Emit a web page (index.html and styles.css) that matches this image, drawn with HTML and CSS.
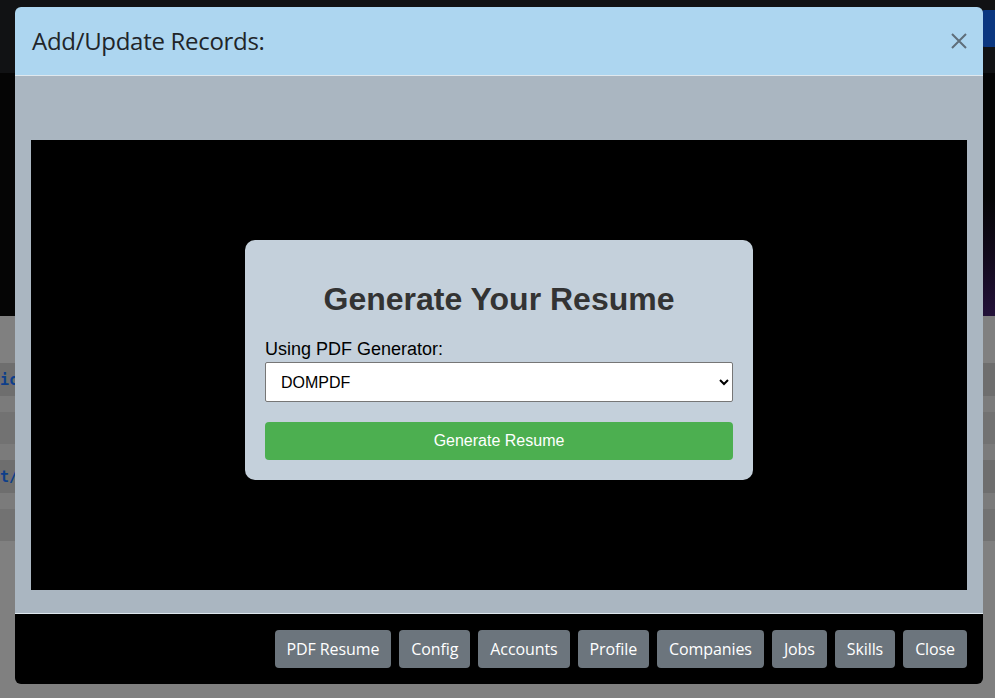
FILE: index.html
```html
<!DOCTYPE html>
<html>
<head>
<meta charset="utf-8">
<link rel="stylesheet" href="styles.css">
</head>
<body>
<div class="page">
  <div class="navbar"><span class="nav-btn"></span></div>
  <div class="hero"></div>
  <div class="table">
    <div class="row r-a"></div>
    <div class="row r-dark"><span class="code">ic</span></div>
    <div class="row r-a2"></div>
    <div class="row r-mid"></div>
    <div class="row r-a2"></div>
    <div class="row r-dark"><span class="code">t/</span></div>
    <div class="row r-a2"></div>
    <div class="row r-mid"></div>
  </div>
</div>

<div class="modal">
  <div class="modal-header">
    <h5 class="modal-title">Add/Update Records:</h5>
    <button class="btn-close" aria-label="Close">
      <svg width="16" height="16" viewBox="0 0 16 16"><path d="M1 1L15 15M15 1L1 15" stroke="#5f6e7a" stroke-width="2" fill="none"/></svg>
    </button>
  </div>
  <div class="modal-body">
    <div class="frame">
      <div class="card">
        <h1 class="card-title">Generate Your Resume</h1>
        <label class="label">Using PDF Generator:</label>
        <select class="select"><option>DOMPDF</option></select>
        <button class="gen-btn">Generate Resume</button>
      </div>
    </div>
  </div>
  <div class="modal-footer">
    <button class="btn">PDF Resume</button>
    <button class="btn">Config</button>
    <button class="btn">Accounts</button>
    <button class="btn">Profile</button>
    <button class="btn">Companies</button>
    <button class="btn">Jobs</button>
    <button class="btn">Skills</button>
    <button class="btn">Close</button>
  </div>
</div>
</body>
</html>
```
FILE: styles.css
```css
* { box-sizing: border-box; }
html, body { margin: 0; padding: 0; width: 995px; height: 698px; overflow: hidden; background: #808080; }
.page { width: 995px; height: 698px; display: flex; flex-direction: column; }
.navbar { height: 73px; background: #111214; display: flex; justify-content: flex-end; padding-top: 10px; }
.nav-btn { width: 14px; height: 37px; background: #0b3780; border-radius: 4px 0 0 4px; display: block; }
.hero { height: 243px; background: radial-gradient(ellipse 200px 120px at 100% 100%, #24123a 0%, #120a1c 50%, #050505 100%); }
.table { flex: 1; background: #808080; display: flex; flex-direction: column; padding-top: 47px; }
.row { display: flex; align-items: center; }
.r-dark { height: 33px; background: #6e6e6e; }
.r-a { height: 0; }
.r-a2 { height: 16px; background: #7b7b7b; }
.r-mid { height: 32px; background: #727272; }
.code { font-family: "DejaVu Sans Mono", monospace; font-weight: bold; font-size: 15px; color: #0d3e8a; }

.modal { position: absolute; left: 15px; top: 7px; width: 968px; height: 677px; border-radius: 6px; overflow: hidden; display: flex; flex-direction: column; font-family: "Segoe UI", "Open Sans", "Noto Sans", sans-serif; }
.modal-header { height: 69px; background: #add6f0; border-bottom: 1px solid #dfe8ee; display: flex; align-items: center; justify-content: space-between; padding: 0 16px 0 17px; }
.modal-title { margin: 0; font-size: 24px; font-weight: 500; color: #212529; line-height: 36px; letter-spacing: -0.3px; }
.btn-close { background: none; border: none; padding: 0; width: 16px; height: 16px; margin-top: 0; display: flex; }
.modal-body { height: 538px; background: #aab6c1; padding: 64px 16px 0 16px; border-bottom: 1px solid #dfe8ee; }
.frame { height: 450px; background: #000; display: flex; align-items: center; justify-content: center; padding-bottom: 10px; }
.card { width: 508px; height: 240px; background: #c4d0db; border-radius: 10px; padding: 20px; display: flex; flex-direction: column; font-family: "Liberation Sans", Arial, sans-serif; }
.card-title { margin: 21px 0 0 0; text-align: center; font-size: 32px; line-height: 37px; font-weight: bold; color: #333; }
.label { margin-top: 21px; font-size: 18px; line-height: 20px; color: #000; }
.select { margin-top: 3px; height: 40px; width: 468px; font-family: "Liberation Sans", Arial, sans-serif; font-size: 16px; padding: 0 11px; border: 1px solid #767676; border-radius: 2px; background: #fff; color: #000; }
.gen-btn { margin-top: 20px; height: 38px; width: 468px; background: #4caf50; color: #fff; border: none; border-radius: 4px; font-family: "Liberation Sans", Arial, sans-serif; font-size: 16px; }
.modal-footer { flex: 1; background: #000; display: flex; justify-content: flex-end; align-items: center; gap: 8px; padding: 0 16px 0 0; }
.btn { height: 38px; padding: 0 12px; background: #6c757d; color: #fff; border: none; border-radius: 4px; font-family: "Segoe UI", "Open Sans", "Noto Sans", sans-serif; font-size: 16px; letter-spacing: -0.1px; }
```
